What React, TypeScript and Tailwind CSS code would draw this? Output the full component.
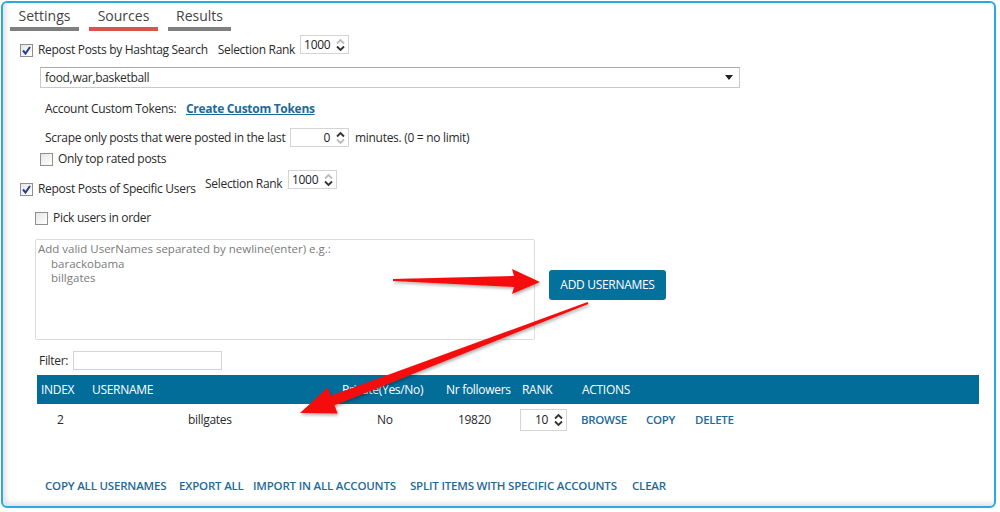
import React from "react";

const Check = ({ checked }: { checked?: boolean }) => (
  <span className="flex h-[13px] w-[13px] shrink-0 items-center justify-center border border-[#8e8f8f] bg-gradient-to-br from-[#e6e6e6] to-[#ffffff]">
    {checked && (
      <svg width="9" height="9" viewBox="0 0 9 9">
        <path d="M1 4.5 L3.5 7.5 L8 1" fill="none" stroke="#283c8c" strokeWidth="2" />
      </svg>
    )}
  </span>
);

const Spin = ({
  value,
  width,
  align = "left",
  up = "#333",
  down = "#333",
  height = "h-[19px]",
}: {
  value: string;
  width: string;
  align?: "left" | "right";
  up?: string;
  down?: string;
  height?: string;
}) => (
  <div className={`flex ${height} ${width} items-center border border-[#d4d4d4] bg-white pl-[3px] pr-[3px]`}>
    <span className={`flex-1 text-[12px] text-[#222] ${align === "right" ? "text-right pr-[6px]" : ""}`}>{value}</span>
    <svg width="9" height="14" viewBox="0 0 9 14">
      <path d="M1 5.5 L4.5 2 L8 5.5" fill="none" stroke={up} strokeWidth="1.8" />
      <path d="M1 8.5 L4.5 12 L8 8.5" fill="none" stroke={down} strokeWidth="1.8" />
    </svg>
  </div>
);

const tabs = [
  { label: "Settings", w: "w-[69px]", bar: "bg-[#7f7f7f]" },
  { label: "Sources", w: "w-[69px]", bar: "bg-[#d9534f]" },
  { label: "Results", w: "w-[63px]", bar: "bg-[#7f7f7f]" },
];

export default function App() {
  return (
    <div className="h-[512px] w-[1000px] bg-white pl-[1px] pt-[1px] font-['Open_Sans',sans-serif] text-[12px] tracking-[-0.3px] text-[#2a2a2a]">
      <div className="relative h-[507px] w-[995px] overflow-hidden rounded-[6px] border-2 border-[#2aa9e0] shadow-[inset_3px_-3px_5px_rgba(0,0,0,0.12)]">
        {/* tabs */}
        <div className="ml-[7px] flex gap-[10px] tracking-normal">
          {tabs.map((t) => (
            <div key={t.label} className={t.w}>
              <div className="flex h-[24px] items-center justify-center text-[14px] text-[#444]">{t.label}</div>
              <div className={`h-[4px] ${t.bar}`} />
            </div>
          ))}
        </div>

        {/* hashtag row */}
        <div className="ml-[17px] mt-[4px] flex h-[23px] items-end">
          <div className="flex h-[16px] items-center">
            <Check checked />
            <span className="ml-[5px]">Repost Posts by Hashtag Search</span>
            <span className="ml-[10px]">Selection Rank</span>
          </div>
          <div className="ml-[5px] self-start">
            <Spin value="1000" width="w-[49px]" up="#bbb" />
          </div>
        </div>

        <div className="ml-[37px] mt-[9px] flex h-[21px] w-[700px] items-center border border-[#c9c9c9] border-t-[#a8a8a8] pl-[4px] pr-[6px]">
          <span className="flex-1">food,war,basketball</span>
          <svg width="8" height="5" viewBox="0 0 8 5">
            <path d="M0 0 H8 L4 5 Z" fill="#222" />
          </svg>
        </div>

        <div className="ml-[42px] mt-[13px] flex h-[16px] items-center">
          <span className="w-[141px]">Account Custom Tokens:</span>
          <span className="font-bold text-[#1d6a98] underline">Create Custom Tokens</span>
        </div>

        <div className="ml-[42px] mt-[11px] flex h-[19px] items-center">
          <span className="w-[245px]">Scrape only posts that were posted in the last</span>
          <Spin value="0" width="w-[59px]" align="right" down="#bbb" />
          <span className="ml-[6px]">minutes. (0 = no limit)</span>
        </div>

        <div className="ml-[37px] mt-[4px] flex h-[16px] items-center">
          <Check />
          <span className="ml-[5px]">Only top rated posts</span>
        </div>

        {/* specific users */}
        <div className="ml-[17px] mt-[3px] flex items-start">
          <div className="mt-[11px] flex h-[16px] w-[185px] items-center">
            <Check checked />
            <span className="ml-[5px]">Repost Posts of Specific Users</span>
          </div>
          <span className="mt-[6px] h-[16px] w-[83px] leading-[16px]">Selection Rank</span>
          <Spin value="1000" width="w-[49px]" up="#bbb" />
        </div>

        <div className="ml-[32px] mt-[13px] flex h-[16px] items-center">
          <Check />
          <span className="ml-[5px]">Pick users in order</span>
        </div>

        <div className="ml-[32px] mt-[13px] flex items-start">
          <div className="h-[101px] w-[500px] rounded-[2px] border border-[#dcdcdc] px-[2px] pt-[2px] text-[11.5px] leading-[14.5px] tracking-normal text-[#7a7a7a]">
            <div>Add valid UserNames separated by newline(enter) e.g.:</div>
            <div className="pl-[13px]">barackobama</div>
            <div className="pl-[13px]">billgates</div>
          </div>
          <button className="ml-[14px] mt-[31px] flex h-[30px] w-[117px] items-center justify-center rounded-[3px] bg-[#04709c] text-[12px] tracking-[-0.3px] text-white">
            ADD USERNAMES
          </button>
        </div>

        <div className="ml-[36px] mt-[11px] flex h-[19px] items-center">
          <span className="w-[34px]">Filter:</span>
          <div className="h-[19px] w-[149px] border border-[#d4d4d4]" />
        </div>

        {/* table */}
        <div className="ml-[34px] mt-[5px] w-[942px]">
          <div className="flex h-[29px] items-center bg-[#036d9a] text-[12px] text-white">
            <span className="w-[55px] pl-[4px]">INDEX</span>
            <span className="w-[250px]">USERNAME</span>
            <span className="w-[104px]">Private(Yes/No)</span>
            <span className="w-[76px]">Nr followers</span>
            <span className="w-[60px]">RANK</span>
            <span>ACTIONS</span>
          </div>
          <div className="flex h-[31px] items-center text-[12px]">
            <span className="w-[55px] pl-[20px]">2</span>
            <span className="w-[250px] pl-[96px]">billgates</span>
            <span className="w-[104px] pl-[35px]">No</span>
            <span className="w-[74px] pl-[12px]">19820</span>
            <div className="w-[61px]">
              <Spin value="10" width="w-[47px]" align="right" height="h-[22px]" />
            </div>
            <span className="w-[65px] text-[11.5px] font-semibold text-[#1d6a98]">BROWSE</span>
            <span className="w-[49px] text-[11.5px] font-semibold text-[#1d6a98]">COPY</span>
            <span className="text-[11.5px] font-semibold text-[#1d6a98]">DELETE</span>
          </div>
        </div>

        <div className="ml-[42px] mt-[43px] flex h-[16px] items-center text-[11.5px] font-semibold tracking-[-0.2px] text-[#1d6a98]">
          <span className="w-[134px]">COPY ALL USERNAMES</span>
          <span className="w-[74px]">EXPORT ALL</span>
          <span className="w-[157px]">IMPORT IN ALL ACCOUNTS</span>
          <span className="w-[222px]">SPLIT ITEMS WITH SPECIFIC ACCOUNTS</span>
          <span>CLEAR</span>
        </div>

        {/* annotation arrows */}
        <svg className="pointer-events-none absolute left-[-3px] top-[-3px]" width="1000" height="512" viewBox="0 0 1000 512">
          <defs>
            <filter id="sh" x="-10%" y="-10%" width="120%" height="130%">
              <feDropShadow dx="1" dy="2" stdDeviation="1.5" floodColor="#000" floodOpacity="0.3" />
            </filter>
          </defs>
          <polygon
            filter="url(#sh)"
            fill="#f50d0d"
            points="393,279 514,276 512,269 540,282 512,294 514,287 393,281"
          />
          <polygon
            filter="url(#sh)"
            fill="#f50d0d"
            points="587.6,302.1 330.9,395.8 327.7,387.4 300,413 337.7,413.6 334.5,405.2 588.4,303.9"
          />
        </svg>
      </div>
    </div>
  );
}
